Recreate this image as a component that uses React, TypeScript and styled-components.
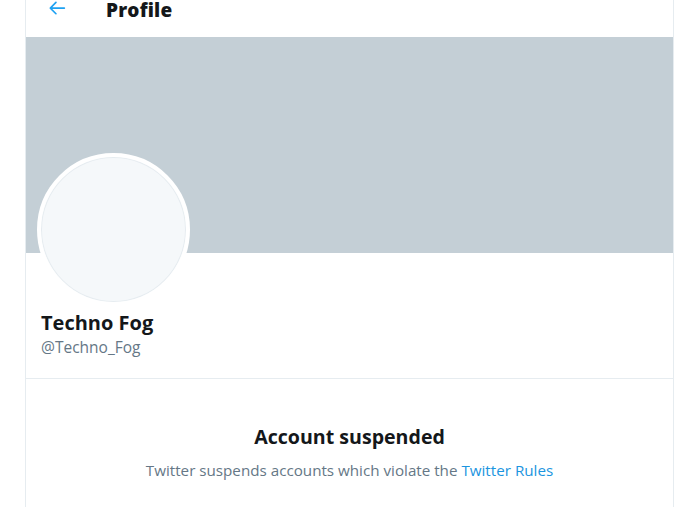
import React from 'react';
import styled, { createGlobalStyle } from 'styled-components';

const GlobalStyle = createGlobalStyle`
  body {
    margin: 0;
    background: #ffffff;
    font-family: "Open Sans", "Noto Sans", sans-serif;
    overflow: hidden;
  }
`;

const Column = styled.main`
  margin-left: 25px;
  margin-top: -18px;
  width: 647px;
  min-height: 540px;
  border-left: 1px solid #e6ecf0;
  border-right: 1px solid #e6ecf0;
  display: flex;
  flex-direction: column;
`;

const Header = styled.header`
  height: 55px;
  display: flex;
  align-items: center;
  padding: 0 22px 0 20px;
  gap: 38px;
`;

const BackButton = styled.button`
  width: 22px;
  height: 22px;
  padding: 0;
  margin-top: -4px;
  border: none;
  background: none;
  color: #1da1f2;
  display: flex;
  align-items: center;
  justify-content: center;
`;

const Title = styled.h2`
  margin: 0;
  font-size: 19px;
  font-weight: 800;
  color: #14171a;
  letter-spacing: 0.2px;
`;

const Banner = styled.div`
  height: 216px;
  background: #c4cfd6;
`;

const ProfileInfo = styled.section`
  padding: 0 15px 20px;
  border-bottom: 1px solid #e6ecf0;
`;

const Avatar = styled.div`
  width: 145px;
  height: 145px;
  margin-top: -100px;
  margin-left: -4px;
  border-radius: 50%;
  border: 4px solid #ffffff;
  background: #f5f8fa;
  box-shadow: inset 0 0 0 1px #e6ecf0;
`;

const Name = styled.div`
  margin-top: 4px;
  font-size: 20px;
  font-weight: 700;
  color: #14171a;
  line-height: 26px;
`;

const Handle = styled.div`
  font-size: 15.5px;
  color: #657786;
  line-height: 22px;
`;

const Notice = styled.section`
  display: flex;
  flex-direction: column;
  align-items: center;
  padding-top: 44px;
`;

const NoticeTitle = styled.h3`
  margin: 0;
  font-size: 19.6px;
  font-weight: 700;
  color: #14171a;
  line-height: 28px;
`;

const NoticeText = styled.p`
  margin: 9px 0 0;
  font-size: 15.2px;
  color: #657786;
  line-height: 20px;
`;

const Link = styled.a`
  color: #1b95e0;
  text-decoration: none;
`;

export default function App() {
  return (
    <>
      <GlobalStyle />
      <Column>
        <Header>
          <BackButton aria-label="Back">
            <svg width="22" height="22" viewBox="0 0 24 24" fill="currentColor">
              <path d="M20 11.1H6.9l4.6-4.6a.9.9 0 0 0-1.3-1.3l-6.1 6.2a.9.9 0 0 0 0 1.3l6.1 6.2a.9.9 0 0 0 1.3-1.3l-4.6-4.6H20a.9.9 0 1 0 0-1.9z" />
            </svg>
          </BackButton>
          <Title>Profile</Title>
        </Header>
        <Banner />
        <ProfileInfo>
          <Avatar />
          <Name>Techno Fog</Name>
          <Handle>@Techno_Fog</Handle>
        </ProfileInfo>
        <Notice>
          <NoticeTitle>Account suspended</NoticeTitle>
          <NoticeText>
            Twitter suspends accounts which violate the <Link href="#">Twitter Rules</Link>
          </NoticeText>
        </Notice>
      </Column>
    </>
  );
}
